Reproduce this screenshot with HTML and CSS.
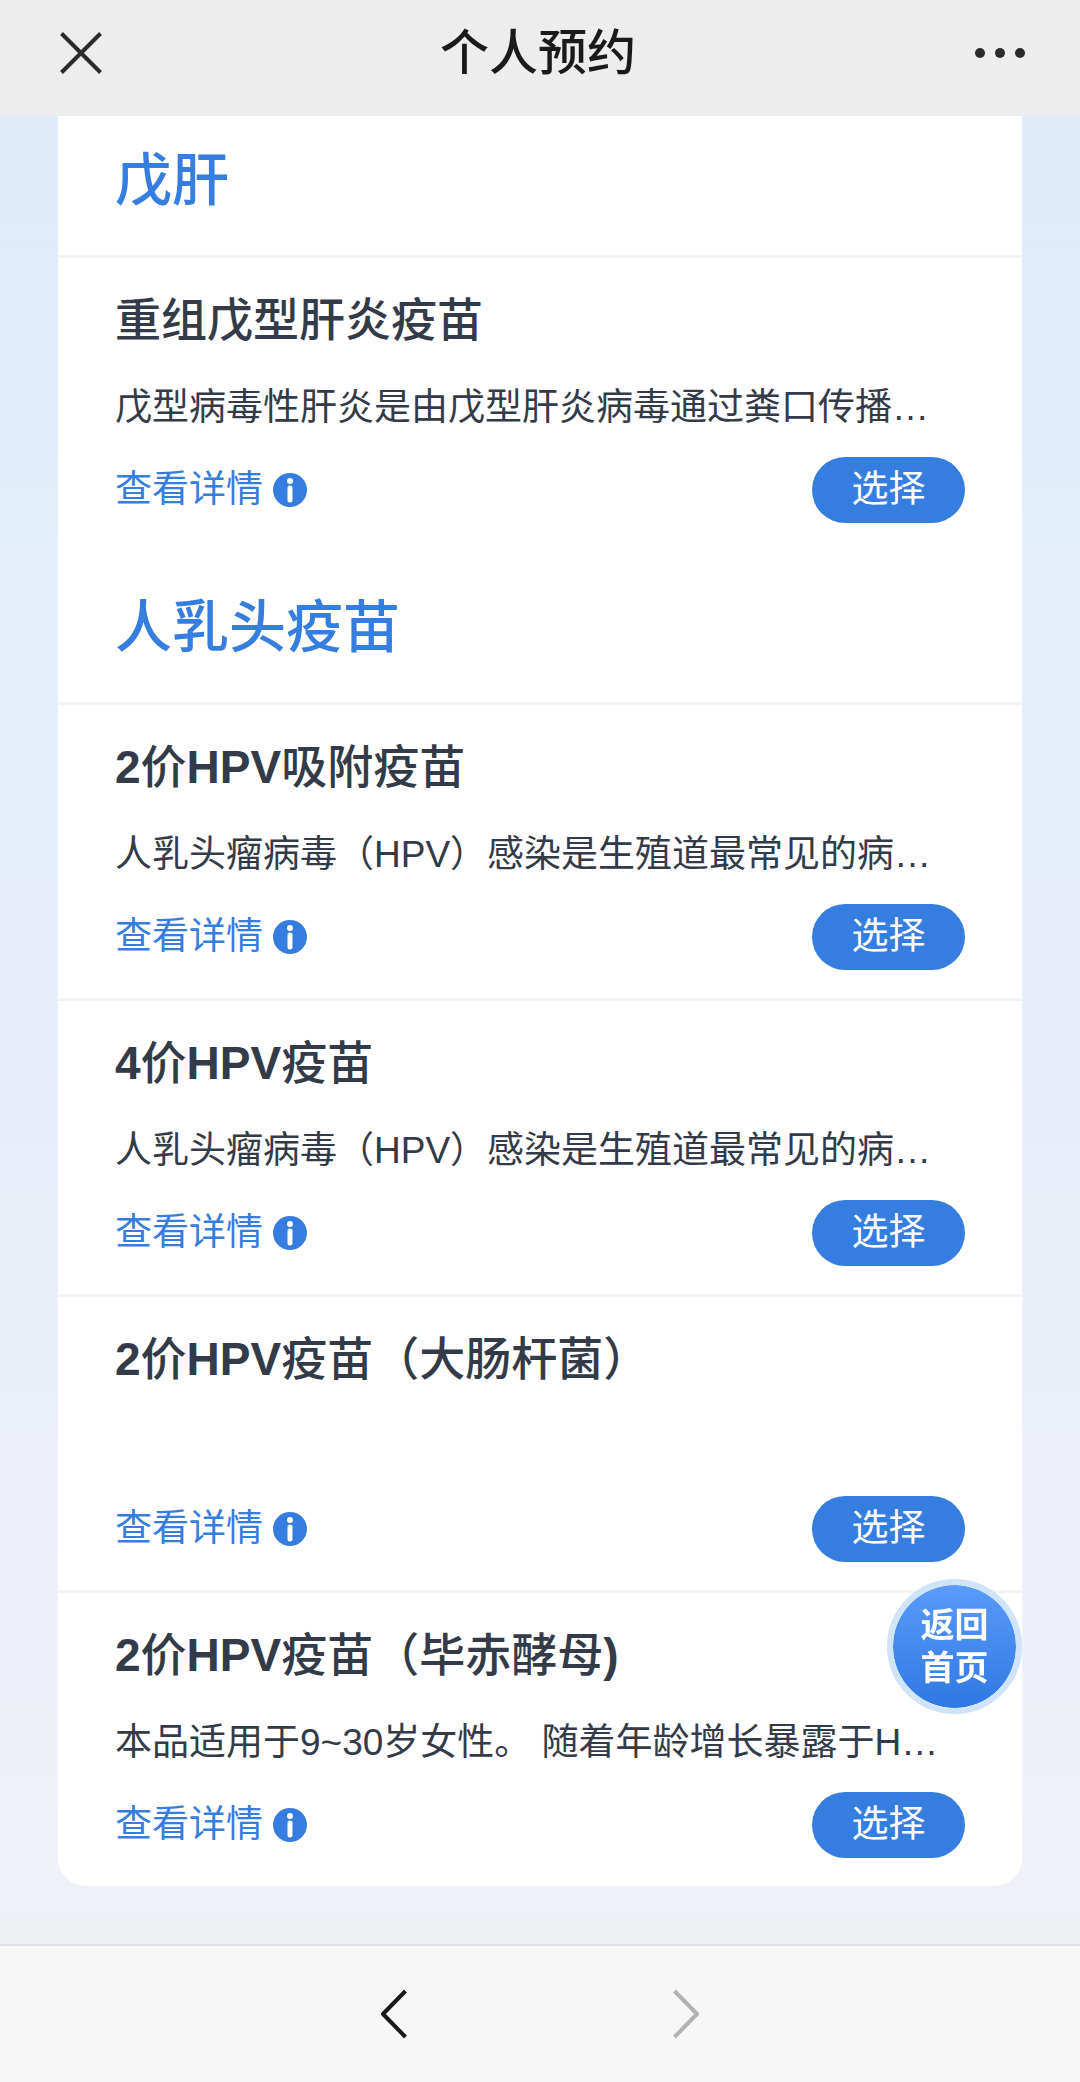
FILE: index.html
```html
<!DOCTYPE html>
<html lang="zh-CN">
<head>
    <meta charset="UTF-8">
    <meta name="viewport" content="width=device-width, initial-scale=1.0">
    <title>个人预约</title>
    <link rel="stylesheet" href="styles.css">
</head>
<body>
    <header class="top-bar">
        <button class="icon-btn" type="button" aria-label="关闭">
            <svg width="42" height="42" viewBox="0 0 42 42" fill="none" stroke="#2b2b2b" stroke-width="4"><path d="M1.5 1.5l39 39M40.5 1.5l-39 39"/></svg>
        </button>
        <h1>个人预约</h1>
        <button class="icon-btn" type="button" aria-label="更多">
            <svg width="52" height="12" viewBox="0 0 52 12" fill="#2b2b2b"><circle cx="6" cy="6" r="5"/><circle cx="26" cy="6" r="5"/><circle cx="46" cy="6" r="5"/></svg>
        </button>
    </header>

    <main class="content">
        <div class="card">
            <h2 class="category">戊肝</h2>

            <section class="vaccine">
                <h3>重组戊型肝炎疫苗</h3>
                <p>戊型病毒性肝炎是由戊型肝炎病毒通过粪口传播…</p>
                <div class="actions">
                    <a class="detail" href="#">查看详情
                        <svg class="info" viewBox="0 0 34 34"><circle cx="17" cy="17" r="17" fill="#367de0"/><circle cx="17" cy="8" r="3" fill="#fff"/><rect x="14.5" y="12.5" width="5" height="17" rx="2.5" fill="#fff"/></svg>
                    </a>
                    <button class="select-btn" type="button">选择</button>
                </div>
            </section>

            <h2 class="category">人乳头疫苗</h2>

            <section class="vaccine">
                <h3><b>2</b>价<b>HPV</b>吸附疫苗</h3>
                <p>人乳头瘤病毒（HPV）感染是生殖道最常见的病…</p>
                <div class="actions">
                    <a class="detail" href="#">查看详情
                        <svg class="info" viewBox="0 0 34 34"><circle cx="17" cy="17" r="17" fill="#367de0"/><circle cx="17" cy="8" r="3" fill="#fff"/><rect x="14.5" y="12.5" width="5" height="17" rx="2.5" fill="#fff"/></svg>
                    </a>
                    <button class="select-btn" type="button">选择</button>
                </div>
            </section>

            <section class="vaccine">
                <h3><b>4</b>价<b>HPV</b>疫苗</h3>
                <p>人乳头瘤病毒（HPV）感染是生殖道最常见的病…</p>
                <div class="actions">
                    <a class="detail" href="#">查看详情
                        <svg class="info" viewBox="0 0 34 34"><circle cx="17" cy="17" r="17" fill="#367de0"/><circle cx="17" cy="8" r="3" fill="#fff"/><rect x="14.5" y="12.5" width="5" height="17" rx="2.5" fill="#fff"/></svg>
                    </a>
                    <button class="select-btn" type="button">选择</button>
                </div>
            </section>

            <section class="vaccine">
                <h3><b>2</b>价<b>HPV</b>疫苗（大肠杆菌）</h3>
                <p></p>
                <div class="actions">
                    <a class="detail" href="#">查看详情
                        <svg class="info" viewBox="0 0 34 34"><circle cx="17" cy="17" r="17" fill="#367de0"/><circle cx="17" cy="8" r="3" fill="#fff"/><rect x="14.5" y="12.5" width="5" height="17" rx="2.5" fill="#fff"/></svg>
                    </a>
                    <button class="select-btn" type="button">选择</button>
                </div>
            </section>

            <section class="vaccine">
                <h3><b>2</b>价<b>HPV</b>疫苗（毕赤酵母<b>)</b></h3>
                <p>本品适用于9~30岁女性。 随着年龄增长暴露于H…</p>
                <div class="actions">
                    <a class="detail" href="#">查看详情
                        <svg class="info" viewBox="0 0 34 34"><circle cx="17" cy="17" r="17" fill="#367de0"/><circle cx="17" cy="8" r="3" fill="#fff"/><rect x="14.5" y="12.5" width="5" height="17" rx="2.5" fill="#fff"/></svg>
                    </a>
                    <button class="select-btn" type="button">选择</button>
                </div>
            </section>
        </div>
    </main>

    <a class="home-btn" href="#">返回<br>首页</a>

    <nav class="bottom-bar">
        <button class="icon-btn" type="button" aria-label="后退">
            <svg width="26" height="50" viewBox="0 0 26 50" fill="none" stroke="#1a1a1a" stroke-width="4" stroke-linejoin="round"><path d="M24.5 2L2 25l22.5 23"/></svg>
        </button>
        <button class="icon-btn" type="button" aria-label="前进" disabled>
            <svg width="26" height="50" viewBox="0 0 26 50" fill="none" stroke="#b2b2b2" stroke-width="4" stroke-linejoin="round"><path d="M1.5 2L24 25 1.5 48"/></svg>
        </button>
    </nav>
</body>
</html>
```

FILE: styles.css
```css
* {
    box-sizing: border-box;
}
body {
    margin: 0;
    min-height: 100vh;
    display: flex;
    flex-direction: column;
    font-family: "Liberation Sans", "Noto Sans CJK SC", sans-serif;
    color: #333b48;
    background: #eef1f6;
}
h1, h2, h3, p {
    margin: 0;
}
.icon-btn {
    display: flex;
    padding: 0;
    border: none;
    background: none;
    cursor: pointer;
}
.top-bar {
    display: flex;
    align-items: center;
    justify-content: space-between;
    height: 116px;
    padding: 0 54px 10px 60px;
    background: #ededed;
}
.top-bar h1 {
    font-size: 49px;
    font-weight: 500;
    line-height: 72px;
    color: #1a1a1a;
}
.content {
    flex: 1;
    padding: 0 58px 57px;
    background: linear-gradient(#ddebfb, #e3eefa 25%, #e7edf9 50%, #edf0fa 80%, #eff1f7 95%, #edf1f4);
}
.card {
    background: #fff;
    border-radius: 0 0 28px 28px;
}
.category {
    padding: 46px 57px 45px;
    font-size: 57px;
    font-weight: 500;
    line-height: 60px;
    color: #367de0;
}
.category:first-child {
    padding-top: 34px;
}
.vaccine {
    padding: 29px 57px 28px;
    border-top: 3px solid #f2f3f5;
}
.vaccine h3 {
    font-size: 46px;
    font-weight: 500;
    line-height: 66px;
}
.vaccine h3 b {
    font-weight: 700;
}
.vaccine p {
    height: 54px;
    margin: 28px 0 22px;
    font-size: 37px;
    line-height: 54px;
    white-space: nowrap;
    overflow: hidden;
    text-overflow: ellipsis;
}
.actions {
    display: flex;
    align-items: center;
    justify-content: space-between;
}
.detail {
    display: flex;
    align-items: center;
    gap: 10px;
    font-size: 37px;
    line-height: 54px;
    color: #367de0;
    text-decoration: none;
}
.info {
    width: 34px;
    height: 34px;
}
.select-btn {
    width: 153px;
    height: 66px;
    padding: 0;
    border: none;
    border-radius: 33px;
    background: #367de0;
    color: #fff;
    font-family: inherit;
    font-size: 37px;
    line-height: 54px;
    cursor: pointer;
}
.home-btn {
    position: fixed;
    right: 58px;
    bottom: 368px;
    display: flex;
    align-items: center;
    justify-content: center;
    width: 135px;
    height: 135px;
    border: 6px solid #d0e4f9;
    border-radius: 50%;
    background: linear-gradient(#5a9bfa, #2f78e2) padding-box;
    color: #fff;
    font-size: 34px;
    font-weight: 700;
    line-height: 43px;
    text-decoration: none;
}
.bottom-bar {
    display: flex;
    align-items: center;
    justify-content: center;
    gap: 266px;
    height: 138px;
    border-top: 2px solid #dddee3;
    background: #f7f7f7;
}
```
